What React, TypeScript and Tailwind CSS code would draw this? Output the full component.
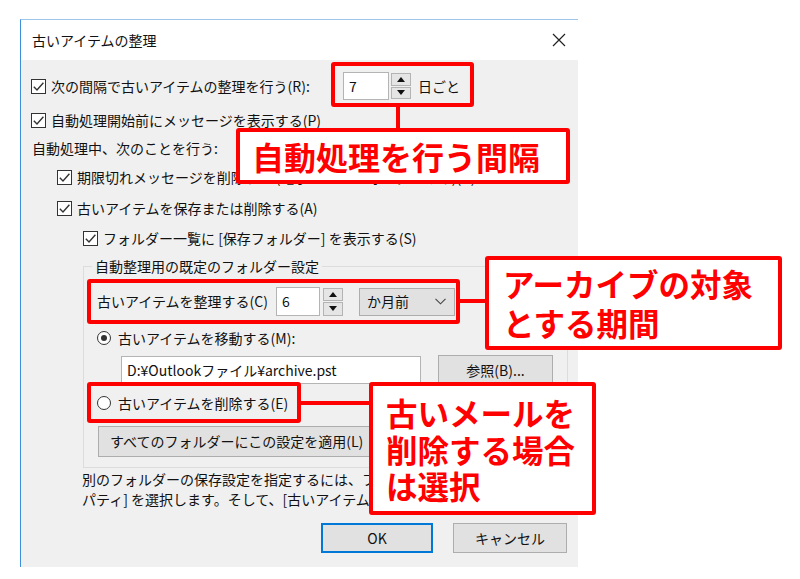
import React from "react";

const FONT = { fontFamily: '"Noto Sans CJK JP", "Noto Sans", sans-serif' };

function Check({ checked = true }: { checked?: boolean }) {
  return (
    <span className="w-[15px] h-[15px] border border-[#333] bg-white flex items-center justify-center shrink-0">
      {checked && (
        <svg width="13" height="13" viewBox="0 0 13 13">
          <path d="M1.8 6.8 L5 10 L11.4 2.8" fill="none" stroke="#333" strokeWidth="1.4" />
        </svg>
      )}
    </span>
  );
}

function Radio({ selected }: { selected?: boolean }) {
  return (
    <span className="w-[14px] h-[14px] rounded-full border border-[#333] bg-white flex items-center justify-center shrink-0">
      {selected && <span className="w-[6px] h-[6px] rounded-full bg-[#333]" />}
    </span>
  );
}

function Spin() {
  return (
    <div className="flex flex-col gap-[1px] w-[20px] h-full">
      <div className="flex-1 bg-[#e5e5e5] border border-[#b4b4b4] flex items-center justify-center">
        <svg width="8" height="5" viewBox="0 0 8 5">
          <path d="M0 5 L4 0 L8 5 Z" fill="#111" />
        </svg>
      </div>
      <div className="flex-1 bg-[#e5e5e5] border border-[#b4b4b4] flex items-center justify-center">
        <svg width="8" height="5" viewBox="0 0 8 5">
          <path d="M0 0 L4 5 L8 0 Z" fill="#111" />
        </svg>
      </div>
    </div>
  );
}

function Row({ indent, children, className = "" }: { indent: string; children: React.ReactNode; className?: string }) {
  return <div className={`flex items-center h-[24px] gap-[5px] ${indent} ${className}`}>{children}</div>;
}

export default function App() {
  return (
    <div className="w-[800px] h-[579px] bg-white relative overflow-hidden text-[14px] text-[#111]" style={FONT}>
      <div className="pt-[19px] pl-[20px]">
        <div className="w-[558px] h-[548px] border-l border-t border-l-[#3d8fdb] border-t-[#9cc6ea] flex flex-col">
          {/* title bar */}
          <div className="h-[40px] bg-white flex items-center justify-between pl-[11px] pr-[12px] shrink-0">
            <span>古いアイテムの整理</span>
            <svg width="14" height="14" viewBox="0 0 14 14">
              <path d="M1 1 L13 13 M13 1 L1 13" stroke="#222" strokeWidth="1.2" />
            </svg>
          </div>

          {/* body */}
          <div className="flex-1 bg-[#f0f0f0] overflow-hidden pl-[10px] pr-[11px] flex flex-col">
            <div className="flex items-center h-[28px] mt-[12px]">
              <div className="flex items-center gap-[5px] w-[312px]">
                <Check />
                <span>次の間隔で古いアイテムの整理を行う(R):</span>
              </div>
              <div className="w-[46px] h-[28px] bg-white border border-[#b4b4b4] flex items-center pl-[5px]">7</div>
              <div className="ml-[2px] h-[26px]">
                <Spin />
              </div>
              <span className="ml-[7px]">日ごと</span>
            </div>

            <Row indent="" className="mt-[8px]">
              <Check />
              <span>自動処理開始前にメッセージを表示する(P)</span>
            </Row>
            <Row indent="ml-[1px]" className="mt-[4px]">
              <span>自動処理中、次のことを行う:</span>
            </Row>
            <Row indent="ml-[26px]" className="mt-[5px]">
              <Check />
              <span className="whitespace-nowrap">期限切れメッセージを削除する (電子メール フォルダーのみ)(D)</span>
            </Row>
            <Row indent="ml-[26px]" className="mt-[7px]">
              <Check />
              <span>古いアイテムを保存または削除する(A)</span>
            </Row>
            <Row indent="ml-[52px]" className="mt-[6px]">
              <Check />
              <span className="whitespace-nowrap">フォルダー一覧に [保存フォルダー] を表示する(S)</span>
            </Row>

            <fieldset className="ml-[52px] mt-[6px] w-[485px] h-[212px] border border-[#dcdcdc] pl-[13px]">
              <legend className="ml-[-5px] px-[3px] h-[20px] leading-[20px]">自動整理用の既定のフォルダー設定</legend>

              <div className="flex items-center h-[29px] mt-[11px]">
                <span className="w-[179px]">古いアイテムを整理する(C)</span>
                <div className="w-[44px] h-[29px] bg-white border border-[#b4b4b4] flex items-center pl-[5px]">6</div>
                <div className="ml-[3px] h-[28px]">
                  <Spin />
                </div>
                <div className="ml-[16px] w-[96px] h-[28px] bg-[#e1e1e1] border border-[#adadad] flex items-center justify-between pl-[7px] pr-[8px]">
                  <span>か月前</span>
                  <svg width="11" height="7" viewBox="0 0 11 7">
                    <path d="M0.5 0.8 L5.5 5.8 L10.5 0.8" fill="none" stroke="#444" strokeWidth="1.1" />
                  </svg>
                </div>
              </div>

              <div className="flex items-center gap-[7px] h-[22px] mt-[11px]">
                <Radio selected />
                <span>古いアイテムを移動する(M):</span>
              </div>

              <div className="flex items-center mt-[6px] h-[30px]">
                <div className="ml-[24px] w-[300px] h-[28px] bg-white border border-[#b4b4b4] flex items-center pl-[5px]">
                  D:¥Outlookファイル¥archive.pst
                </div>
                <button className="ml-[17px] w-[115px] h-[30px] bg-[#e1e1e1] border border-[#adadad]">参照(B)...</button>
              </div>

              <div className="flex items-center gap-[7px] h-[22px] mt-[7px]">
                <Radio />
                <span>古いアイテムを削除する(E)</span>
              </div>

              <button className="ml-[1px] mt-[12px] w-[276px] h-[31px] bg-[#e1e1e1] border border-[#adadad] flex items-center pl-[11px] whitespace-nowrap overflow-hidden">
                すべてのフォルダーにこの設定を適用(L)
              </button>
            </fieldset>

            <div className="ml-[51px] mt-[1px] w-[290px] leading-[20px] whitespace-nowrap overflow-hidden">
              <div>別のフォルダーの保存設定を指定するには、フォルダーを右クリックして [プロ</div>
              <div>パティ] を選択します。そして、[古いアイテムの整理] タブをクリックします。</div>
            </div>

            <div className="flex justify-end gap-[20px] mt-[14px]">
              <button className="w-[112px] h-[30px] bg-[#e1e1e1] border-2 border-[#0078d7]">OK</button>
              <button className="w-[114px] h-[30px] bg-[#e1e1e1] border border-[#adadad]">キャンセル</button>
            </div>
          </div>
        </div>
      </div>

      {/* annotations */}
      <div className="absolute left-[331px] top-[62px] w-[143px] h-[45px] border-4 border-[#ff0000] rounded-[3px]" />
      <div className="absolute left-[396px] top-[106px] w-[4px] h-[23px] bg-[#ff0000]" />
      <div className="absolute left-[236px] top-[128px] w-[334px] h-[56px] border-4 border-[#ff0000] rounded-[3px] bg-white flex items-center pl-[12px] text-[32px] font-bold text-[#ff0000] leading-none">
        自動処理を行う間隔
      </div>

      <div className="absolute left-[87px] top-[279px] w-[373px] h-[45px] border-4 border-[#ff0000] rounded-[3px]" />
      <div className="absolute left-[459px] top-[299px] w-[27px] h-[4px] bg-[#ff0000]" />
      <div className="absolute left-[485px] top-[256px] w-[297px] h-[94px] border-4 border-[#ff0000] rounded-[3px] bg-white pl-[14px] pt-[4px] text-[31.5px] font-bold text-[#ff0000] leading-[39px]">
        <div>アーカイブの対象</div>
        <div>とする期間</div>
      </div>

      <div className="absolute left-[87px] top-[382px] w-[214px] h-[41px] border-4 border-[#ff0000] rounded-[3px]" />
      <div className="absolute left-[300px] top-[401px] w-[70px] h-[4px] bg-[#ff0000]" />
      <div className="absolute left-[369px] top-[382px] w-[227px] h-[133px] border-4 border-[#ff0000] rounded-[3px] bg-white pl-[13px] pt-[8px] text-[31.5px] font-bold text-[#ff0000] leading-[36.5px]">
        <div>古いメールを</div>
        <div>削除する場合</div>
        <div>は選択</div>
      </div>
    </div>
  );
}
